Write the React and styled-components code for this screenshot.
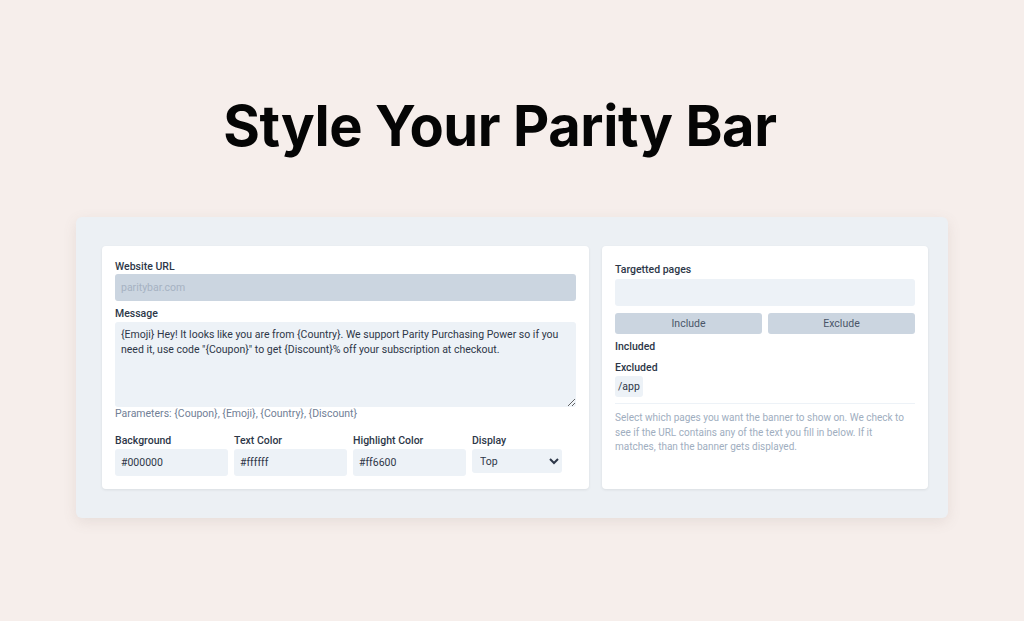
import React from 'react';
import styled, { createGlobalStyle } from 'styled-components';

const GlobalStyle = createGlobalStyle`
  html, body {
    margin: 0;
    padding: 0;
    background: #f6eeeb;
    font-family: Roboto, "Noto Sans", sans-serif;
  }
  * {
    box-sizing: border-box;
  }
`;

const Page = styled.div`
  width: 1024px;
  height: 621px;
  display: flex;
  flex-direction: column;
  align-items: center;
  padding-top: 88px;
`;

const Title = styled.h1`
  margin: 0 24px 0 0;
  font-family: Inter, "Noto Sans", sans-serif;
  font-size: 56px;
  font-weight: 700;
  letter-spacing: -0.4px;
  color: #050505;
  line-height: 76px;
`;

const Panel = styled.div`
  margin-top: 53px;
  width: 872px;
  background: #ecf0f4;
  border-radius: 6px;
  box-shadow: 0 4px 14px rgba(120, 100, 90, 0.12);
  padding: 29px 20px 29px 26px;
  display: grid;
  grid-template-columns: 487px 326px;
  gap: 13px;
`;

const Card = styled.div`
  background: #ffffff;
  border-radius: 4px;
  box-shadow: 0 1px 3px rgba(0, 0, 0, 0.08);
  padding: ${(p) => p.$pad || '14px 13px 13px'};
  height: 243px;
  display: flex;
  flex-direction: column;
`;

const Label = styled.label`
  display: block;
  font-size: 10.5px;
  font-weight: 500;
  color: #2d3748;
  line-height: 14px;
  margin-bottom: ${(p) => p.$mb || '0'};
`;

const Field = styled.input`
  display: block;
  width: 100%;
  height: ${(p) => p.$h || '27px'};
  border: none;
  border-radius: 3px;
  background: ${(p) => (p.disabled ? '#cbd5e0' : '#edf2f7')};
  font-family: inherit;
  font-size: 10.5px;
  color: #2d3748;
  padding: 0 6px;
  outline: none;
  &::placeholder {
    color: #a6b2c2;
  }
`;

const Area = styled.textarea`
  display: block;
  width: 100%;
  height: 85px;
  border: none;
  border-radius: 3px;
  background: #edf2f7;
  font-family: inherit;
  font-size: 10.5px;
  line-height: 14.5px;
  color: #2d3748;
  padding: 6px 6px;
  resize: vertical;
  outline: none;
`;

const Group = styled.div`
  margin-bottom: ${(p) => p.$mb || '0'};
`;

const Hint = styled.div`
  font-size: 10.5px;
  color: #718096;
  line-height: 14px;
  margin-top: 0;
`;

const ColorRow = styled.div`
  display: grid;
  grid-template-columns: 113px 113px 113px 113px;
  gap: 6px;
  margin-top: 13px;
`;

const Select = styled.select`
  display: block;
  width: 90px;
  height: 24px;
  border: none;
  border-radius: 3px;
  background: #edf2f7;
  font-family: inherit;
  font-size: 10.5px;
  color: #2d3748;
  padding: 0 4px;
  outline: none;
`;

const ButtonRow = styled.div`
  display: grid;
  grid-template-columns: 1fr 1fr;
  gap: 6px;
  margin-top: 7px;
`;

const Button = styled.button`
  height: 21px;
  border: none;
  border-radius: 3px;
  background: #cbd5e0;
  color: #4a5568;
  font-family: inherit;
  font-size: 10.5px;
  cursor: pointer;
`;

const ListTitle = styled.div`
  font-size: 10.5px;
  font-weight: 500;
  color: #2d3748;
  line-height: 14px;
  margin-top: ${(p) => p.$mt || '0'};
`;

const Chips = styled.div`
  display: flex;
  gap: 4px;
  margin-top: 1px;
`;

const Chip = styled.span`
  display: inline-flex;
  align-items: center;
  height: 21px;
  padding: 0 3px;
  border-radius: 3px;
  background: #edf2f7;
  font-size: 10.5px;
  color: #2d3748;
`;

const Divider = styled.div`
  height: 1px;
  background: #edf2f7;
  margin-top: 6px;
`;

const Help = styled.p`
  margin: 7px 0 0;
  font-size: 10px;
  line-height: 14.5px;
  color: #a0aec0;
`;

export default function App() {
  return (
    <>
      <GlobalStyle />
      <Page>
        <Title>Style Your Parity Bar</Title>
        <Panel>
          <Card>
            <Group $mb="6px">
              <Label>Website URL</Label>
              <Field disabled placeholder="paritybar.com" />
            </Group>
            <Group>
              <Label $mb="1px">Message</Label>
              <Area
                defaultValue={'{Emoji} Hey! It looks like you are from {Country}. We support Parity Purchasing Power so if you need it, use code "{Coupon}" to get {Discount}% off your subscription at checkout.'}
              />
              <Hint>Parameters: {'{Coupon}'}, {'{Emoji}'}, {'{Country}'}, {'{Discount}'}</Hint>
            </Group>
            <ColorRow>
              <Group>
                <Label $mb="1px">Background</Label>
                <Field defaultValue="#000000" />
              </Group>
              <Group>
                <Label $mb="1px">Text Color</Label>
                <Field defaultValue="#ffffff" />
              </Group>
              <Group>
                <Label $mb="1px">Highlight Color</Label>
                <Field defaultValue="#ff6600" />
              </Group>
              <Group>
                <Label $mb="1px">Display</Label>
                <Select defaultValue="top">
                  <option value="top">Top</option>
                  <option value="bottom">Bottom</option>
                </Select>
              </Group>
            </ColorRow>
          </Card>
          <Card $pad="17px 13px 13px">
            <Label $mb="2px">Targetted pages</Label>
            <Field />
            <ButtonRow>
              <Button>Include</Button>
              <Button>Exclude</Button>
            </ButtonRow>
            <ListTitle $mt="6px">Included</ListTitle>
            <ListTitle $mt="7px">Excluded</ListTitle>
            <Chips>
              <Chip>/app</Chip>
            </Chips>
            <Divider />
            <Help>
              Select which pages you want the banner to show on. We check to see if the URL
              contains any of the text you fill in below. If it matches, than the banner gets
              displayed.
            </Help>
          </Card>
        </Panel>
      </Page>
    </>
  );
}
